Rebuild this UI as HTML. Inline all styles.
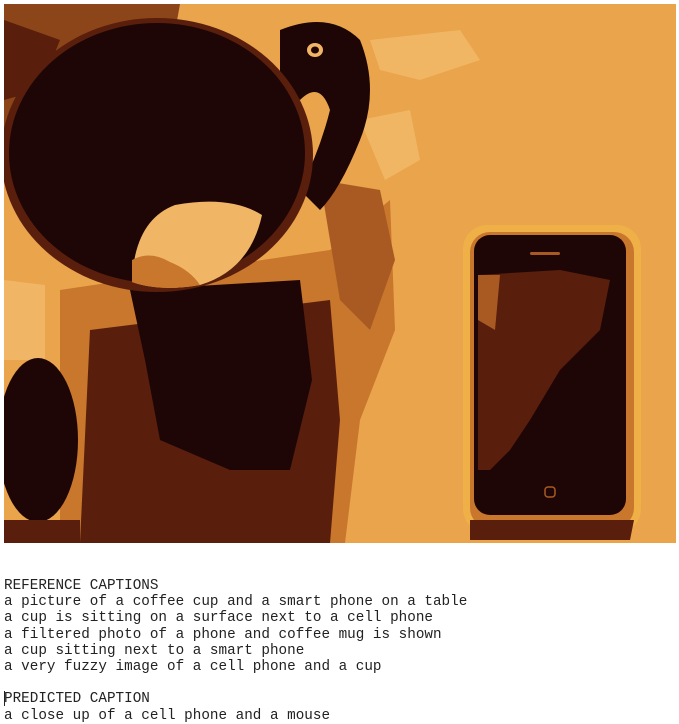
<!DOCTYPE html>
<html><head><style>
body{margin:0;background:#fff;width:679px;height:723px;overflow:hidden;position:relative}
svg{position:absolute;left:4px;top:4px}
.t{position:absolute;left:4px;top:578px;font-family:"Liberation Mono",monospace;font-size:14.3px;line-height:16.2px;color:#222;white-space:pre}
.cur{position:absolute;left:4px;top:691px;width:1px;height:15px;background:#222}
</style></head><body>
<svg width="672" height="539" viewBox="4 4 672 539">
<rect x="4" y="4" width="672" height="539" fill="#E9A44C"/>
<path d="M370 40 L460 30 L480 60 L420 80 L380 70Z" fill="#F3BE6E" opacity=".7"/>
<path d="M360 120 L410 110 L420 160 L385 180Z" fill="#F3BE6E" opacity=".7"/>
<path d="M4 4 L180 4 L170 60 L120 40 L60 70 L30 110 L4 130Z" fill="#8C4518"/>
<path d="M4 20 L60 40 L40 90 L4 100Z" fill="#5A1E0C"/>
<path d="M4 280 L45 285 L45 360 L4 360Z" fill="#F0B665"/>
<path d="M60 290 L330 250 L390 200 L395 330 L360 420 L345 543 L60 543Z" fill="#C8772C"/>
<path d="M320 180 L380 190 L395 260 L370 330 L340 300Z" fill="#A85A22"/>
<path d="M90 330 L330 300 L340 420 L330 543 L80 543Z" fill="#5A1E0C"/>
<path d="M130 290 L300 280 L312 380 L290 470 L230 470 L160 440 L145 360Z" fill="#1E0606"/>
<path d="M280 30 Q330 10 360 40 Q380 90 360 140 Q340 190 320 210 L300 190 Q320 150 330 110 Q320 80 300 100 L280 80Z" fill="#1E0606"/>
<ellipse cx="315" cy="50" rx="8" ry="7" fill="#F0B665"/>
<ellipse cx="315" cy="50" rx="4" ry="3.5" fill="#1E0606"/>
<ellipse cx="157" cy="155" rx="156" ry="137" fill="#5A1E0C"/>
<ellipse cx="157" cy="153" rx="148" ry="130" fill="#1E0606"/>
<path d="M132 280 Q135 220 175 205 Q230 195 262 215 Q250 270 200 285 Q160 292 132 282Z" fill="#F0B665"/>
<path d="M132 260 Q150 250 170 262 Q190 270 200 285 Q160 292 132 282Z" fill="#C8772C"/>
<ellipse cx="38" cy="440" rx="40" ry="82" fill="#1E0606"/>
<path d="M4 520 L80 520 L80 543 L4 543Z" fill="#5A1E0C"/>
<rect x="463" y="225" width="178" height="308" rx="24" fill="#F0B048"/>
<rect x="470" y="232" width="164" height="296" rx="20" fill="#C8772C"/>
<rect x="474" y="235" width="152" height="280" rx="16" fill="#1E0606"/>
<path d="M478 275 L560 270 L610 280 L600 330 L560 370 L530 420 L510 450 L490 470 L478 470Z" fill="#5A1E0C"/>
<path d="M478 275 L500 275 L495 330 L478 320Z" fill="#A85A22"/>
<rect x="530" y="252" width="30" height="3" rx="1.5" fill="#A85A22"/>
<rect x="545" y="487" width="10" height="10" rx="3" fill="none" stroke="#A85A22" stroke-width="1.5"/>
<path d="M470 520 L634 520 L630 540 L470 540Z" fill="#5A1E0C"/>
</svg>
<div class="t">REFERENCE CAPTIONS
a picture of a coffee cup and a smart phone on a table
a cup is sitting on a surface next to a cell phone
a filtered photo of a phone and coffee mug is shown
a cup sitting next to a smart phone
a very fuzzy image of a cell phone and a cup

PREDICTED CAPTION
a close up of a cell phone and a mouse</div>
<div class="cur"></div>
</body></html>
